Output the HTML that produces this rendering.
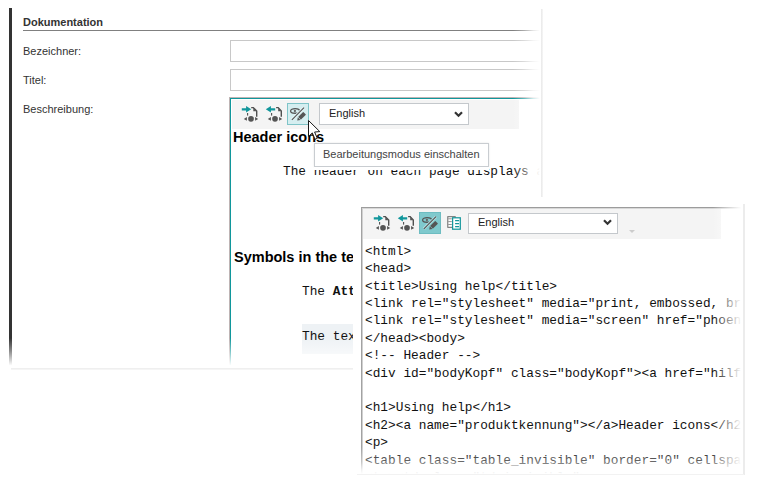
<!DOCTYPE html>
<html><head><meta charset="utf-8">
<style>
*{margin:0;padding:0;box-sizing:border-box}
html,body{width:758px;height:487px;overflow:hidden;background:#fff}
body{position:relative;font-family:"Liberation Sans",sans-serif;color:#333}
.a{position:absolute}
.t{position:absolute;white-space:nowrap;line-height:14px}
.s11{font-size:11px}
.mono{font-family:"Liberation Mono",monospace;font-size:12.8px;color:#111;line-height:17.4px}
#c1{position:absolute;left:0;top:0;width:541px;height:368px;overflow:hidden}
#c2{position:absolute;left:353px;top:197px;width:390px;height:277px;background:#fff;overflow:hidden}
svg{position:absolute;overflow:visible}
</style></head><body>

<!-- ============ WINDOW 1 ============ -->
<div id="c1">
  <div class="a" style="left:9px;top:8px;width:3px;height:358px;background:#333"></div>
  <div class="t s11" style="left:23px;top:15px;font-weight:bold">Dokumentation</div>
  <div class="a" style="left:23px;top:30px;width:520px;height:1px;background:#808080"></div>
  <div class="t s11" style="left:23px;top:44px">Bezeichner:</div>
  <div class="t s11" style="left:23px;top:73px">Titel:</div>
  <div class="t s11" style="left:23px;top:102px">Beschreibung:</div>

  <div class="a" style="left:230px;top:40px;width:340px;height:22px;border:1px solid #c8c8c8"></div>
  <div class="a" style="left:230px;top:69px;width:340px;height:22px;border:1px solid #c8c8c8"></div>

  <!-- editor 1 -->
  <div class="a" style="left:229px;top:97px;width:340px;height:300px;border:1px solid #bfb4b4"></div>
  <div class="a" style="left:230px;top:98px;width:340px;height:300px;border:1.3px solid #10979c;border-right:none;border-bottom:none"></div>
  <div class="a" style="left:232px;top:100px;width:287px;height:28.6px;background:#f4f4f4"></div>

  <!-- tool icons 1 -->
  <svg id="i1a" style="left:242px;top:105px" width="17" height="17" viewBox="0 0 17 17"><path d="M-0.2,3.15 H4.1 V1.1 L9.2,4.3 L4.1,7.5 V5.45 H-0.2 Z" fill="#12979c"/><path d="M9.2,2.6 H11.3 L14.7,6 V11.8" fill="none" stroke="#505050" stroke-width="1.4"/><path d="M11.3,2.4 L14.9,6.2 H11.3 Z" fill="#555"/><rect x="5" y="8" width="1.15" height="2.6" fill="#555"/><path d="M1.8,13.95 L4.9,12.1 V15.8 Z M16.2,13.95 L13.1,12.1 V15.8 Z" fill="#555"/><circle cx="9" cy="13.85" r="2.85" fill="#555"/></svg>
  <svg id="i1b" style="left:266px;top:105px" width="17" height="17" viewBox="0 0 17 17"><path d="M-0.2,4.3 L4.9,1.1 V3.15 H9.2 V5.45 H4.9 V7.5 Z" fill="#12979c"/><path d="M10.1,2.6 H12.2 L15.3,6 V11.8" fill="none" stroke="#505050" stroke-width="1.4"/><path d="M12.2,2.4 L15.5,6.2 H12.2 Z" fill="#555"/><rect x="5" y="8" width="1.15" height="2.6" fill="#555"/><path d="M1.8,13.95 L4.9,12.1 V15.8 Z M16.2,13.95 L13.1,12.1 V15.8 Z" fill="#555"/><circle cx="9" cy="13.85" r="2.85" fill="#555"/></svg>
  <div class="a" style="left:287px;top:103px;width:22px;height:22px;background:#d5eef0;border:1px solid #7fc4c8"></div>
  <svg id="i1c" style="left:287px;top:103px" width="22" height="22" viewBox="0 0 22 22"><ellipse cx="8.1" cy="7.9" rx="4.5" ry="2.35" fill="none" stroke="#555" stroke-width="1.3"/><circle cx="7.9" cy="8" r="1.15" fill="#666"/><path d="M4.9,16.8 L17,4.7" stroke="#e8f6f7" stroke-width="2.8"/><path d="M4.9,16.8 L17,4.7" stroke="#555" stroke-width="1.2"/><g transform="translate(10.2,17.6) rotate(-45)"><path d="M0,0 L2.8,-1.9 V1.9 Z" fill="#555"/><rect x="3.3" y="-1.95" width="7.2" height="3.9" rx="0.5" fill="#555"/></g></svg>

  <div class="a" style="left:319px;top:103px;width:150px;height:22px;background:#fff;border:1px solid #c4c8cc"></div>
  <div class="t s11" style="left:329px;top:106px;color:#222">English</div>
  <svg style="left:453.5px;top:110.5px" width="9" height="7" viewBox="0 0 9 7"><path d="M1,1.2 L4.5,4.7 L8,1.2" fill="none" stroke="#333" stroke-width="2.2"/></svg>

  <div class="t" style="left:233px;top:129px;font-size:14.5px;font-weight:bold;color:#000;line-height:16px">Header icons</div>
  <!-- cursor -->
  <svg style="left:308px;top:120px" width="14" height="22" viewBox="0 0 14 22"><path d="M0.5,0.5 L0.5,16.5 L4.3,12.9 L7,19.3 L9.3,18.3 L6.6,12 L11.8,11.6 Z" fill="#fff" stroke="#1a1a1a" stroke-width="1" stroke-linejoin="miter"/></svg>

  <div class="t mono" style="left:283px;top:162.7px">The header on each page displays a</div>

  <div class="t" style="left:234px;top:249px;font-size:14.5px;font-weight:bold;color:#000;line-height:16px">Symbols in the text</div>
  <div class="t mono" style="left:302px;top:282.8px">The <b>Att</b>ributes</div>
  <div class="a" style="left:302px;top:324px;width:80px;height:30px;background:#eef2f5"></div>
  <div class="t mono" style="left:302px;top:327.5px">The text</div>

  <!-- tooltip -->
  <div class="a" style="left:314px;top:143px;width:175px;height:23.8px;background:#fff;border:1px solid #c9cdd1;box-shadow:0 0 2px rgba(0,0,0,0.10)"></div>
  <div class="t s11" style="left:323px;top:147px;color:#444">Bearbeitungsmodus einschalten</div>
  <div class="a" style="left:314px;top:166.8px;width:175px;height:3.4px;background:#fff"></div>


  <!-- fades -->
  <div class="a" style="left:513px;top:0;width:28px;height:368px;background:linear-gradient(to right,rgba(255,255,255,0),rgba(255,255,255,.35) 40%,rgba(255,255,255,.8) 72%,#fff 96%)"></div>
  <div class="a" style="left:0;top:338px;width:541px;height:30px;background:linear-gradient(to bottom,rgba(255,255,255,0),rgba(255,255,255,.45) 45%,#fff 92%)"></div>
</div>
<!-- shadow lines 1 -->
<div class="a" style="left:540.7px;top:9px;width:2.3px;height:360px;background:linear-gradient(to right,#e8e8e8,#f6f6f6)"></div>
<div class="a" style="left:10.5px;top:368px;width:532px;height:2px;background:linear-gradient(to bottom,#ececec,#f8f8f8)"></div>

<!-- ============ WINDOW 2 ============ -->
<div id="c2">
  <div class="a" style="left:8px;top:10px;width:400px;height:300px;border-left:1px solid #a2a2a2;border-top:1px solid #9c9c9c"></div>
  <div class="a" style="left:9px;top:11px;width:400px;height:300px;border-left:1px solid #d0d0d0;border-top:1px solid #d8d8d8"></div>
  <div class="a" style="left:10px;top:12px;width:358px;height:30px;background:#f4f4f4"></div>
  <svg style="left:21px;top:17px" width="17" height="17" viewBox="0 0 17 17"><path d="M-0.2,3.15 H4.1 V1.1 L9.2,4.3 L4.1,7.5 V5.45 H-0.2 Z" fill="#12979c"/><path d="M9.2,2.6 H11.3 L14.7,6 V11.8" fill="none" stroke="#505050" stroke-width="1.4"/><path d="M11.3,2.4 L14.9,6.2 H11.3 Z" fill="#555"/><rect x="5" y="8" width="1.15" height="2.6" fill="#555"/><path d="M1.8,13.95 L4.9,12.1 V15.8 Z M16.2,13.95 L13.1,12.1 V15.8 Z" fill="#555"/><circle cx="9" cy="13.85" r="2.85" fill="#555"/></svg>
  <svg style="left:45px;top:17px" width="17" height="17" viewBox="0 0 17 17"><path d="M-0.2,4.3 L4.9,1.1 V3.15 H9.2 V5.45 H4.9 V7.5 Z" fill="#12979c"/><path d="M10.1,2.6 H12.2 L15.3,6 V11.8" fill="none" stroke="#505050" stroke-width="1.4"/><path d="M12.2,2.4 L15.5,6.2 H12.2 Z" fill="#555"/><rect x="5" y="8" width="1.15" height="2.6" fill="#555"/><path d="M1.8,13.95 L4.9,12.1 V15.8 Z M16.2,13.95 L13.1,12.1 V15.8 Z" fill="#555"/><circle cx="9" cy="13.85" r="2.85" fill="#555"/></svg>
  <div class="a" style="left:66px;top:15px;width:22px;height:22px;background:#7fc9cd;border:1px solid #6dbcc1"></div>
  <svg style="left:66px;top:15px" width="22" height="22" viewBox="0 0 22 22"><ellipse cx="8.1" cy="7.9" rx="4.5" ry="2.35" fill="none" stroke="#555" stroke-width="1.3"/><circle cx="7.9" cy="8" r="1.15" fill="#666"/><path d="M4.9,16.8 L17,4.7" stroke="#b8e2e4" stroke-width="2.8"/><path d="M4.9,16.8 L17,4.7" stroke="#555" stroke-width="1.2"/><g transform="translate(10.2,17.6) rotate(-45)"><path d="M0,0 L2.8,-1.9 V1.9 Z" fill="#555"/><rect x="3.3" y="-1.95" width="7.2" height="3.9" rx="0.5" fill="#555"/></g></svg>
  <svg style="left:94px;top:19px" width="15" height="15" viewBox="0 0 15 15"><rect x="0.8" y="0.7" width="7.4" height="10.6" fill="#fff" stroke="#666" stroke-width="1"/><path d="M1.2,2.8 H4.8 M1.2,5.6 H4.8 M1.2,8.5 H4.8" stroke="#888" stroke-width="0.9"/><rect x="5.6" y="1.8" width="7.7" height="11.4" fill="#fff" stroke="#15979c" stroke-width="1.25"/><path d="M8.1,4.6 H12.1 M8.1,7.6 H12.1 M8.1,10.6 H12.1" stroke="#15979c" stroke-width="1.1"/></svg>
  <div class="a" style="left:115px;top:15.5px;width:150px;height:21.6px;background:#fff;border:1px solid #c4c8cc"></div>
  <div class="t s11" style="left:125px;top:18px;color:#222">English</div>
  <svg style="left:250px;top:22px" width="9" height="7" viewBox="0 0 9 7"><path d="M1,1.2 L4.5,4.7 L8,1.2" fill="none" stroke="#333" stroke-width="2.2"/></svg>
  <svg style="left:276px;top:33px" width="6" height="4" viewBox="0 0 6 4"><path d="M0,0 H6 L3,3 Z" fill="#ccc"/></svg>
  <div class="t mono" style="left:12px;top:45.8px">&lt;html&gt;<br>&lt;head&gt;<br>&lt;title&gt;Using help&lt;/title&gt;<br>&lt;link rel=&quot;stylesheet&quot; media=&quot;print, embossed, braille&quot; href=&quot;x.css&quot;&gt;<br>&lt;link rel=&quot;stylesheet&quot; media=&quot;screen&quot; href=&quot;phoenix.css&quot;&gt;<br>&lt;/head&gt;&lt;body&gt;<br>&lt;!-- Header --&gt;<br>&lt;div id=&quot;bodyKopf&quot; class=&quot;bodyKopf&quot;&gt;&lt;a href=&quot;hilfe.html&quot;&gt;<br>&nbsp;<br>&lt;h1&gt;Using help&lt;/h1&gt;<br>&lt;h2&gt;&lt;a name=&quot;produktkennung&quot;&gt;&lt;/a&gt;Header icons&lt;/h2&gt;<br>&lt;p&gt;<br>&lt;table class=&quot;table_invisible&quot; border=&quot;0&quot; cellspacing=&quot;0&quot;&gt;<br>&lt;tr&gt;&lt;td class=&quot;td_invisible&quot;&gt;</div>
  <div class="a" style="left:360px;top:0;width:30px;height:277px;background:linear-gradient(to right,rgba(255,255,255,0),#fff 95%)"></div>
  <div class="a" style="left:0;top:250px;width:390px;height:27px;background:linear-gradient(to bottom,rgba(255,255,255,0),rgba(255,255,255,.38) 55%,rgba(255,255,255,.85) 85%,#fff 100%)"></div>
</div>
<div class="a" style="left:743px;top:204px;width:1.5px;height:271px;background:#ececec"></div>
<div class="a" style="left:357px;top:474px;width:387px;height:1.3px;background:#f2f2f2"></div>

</body></html>
